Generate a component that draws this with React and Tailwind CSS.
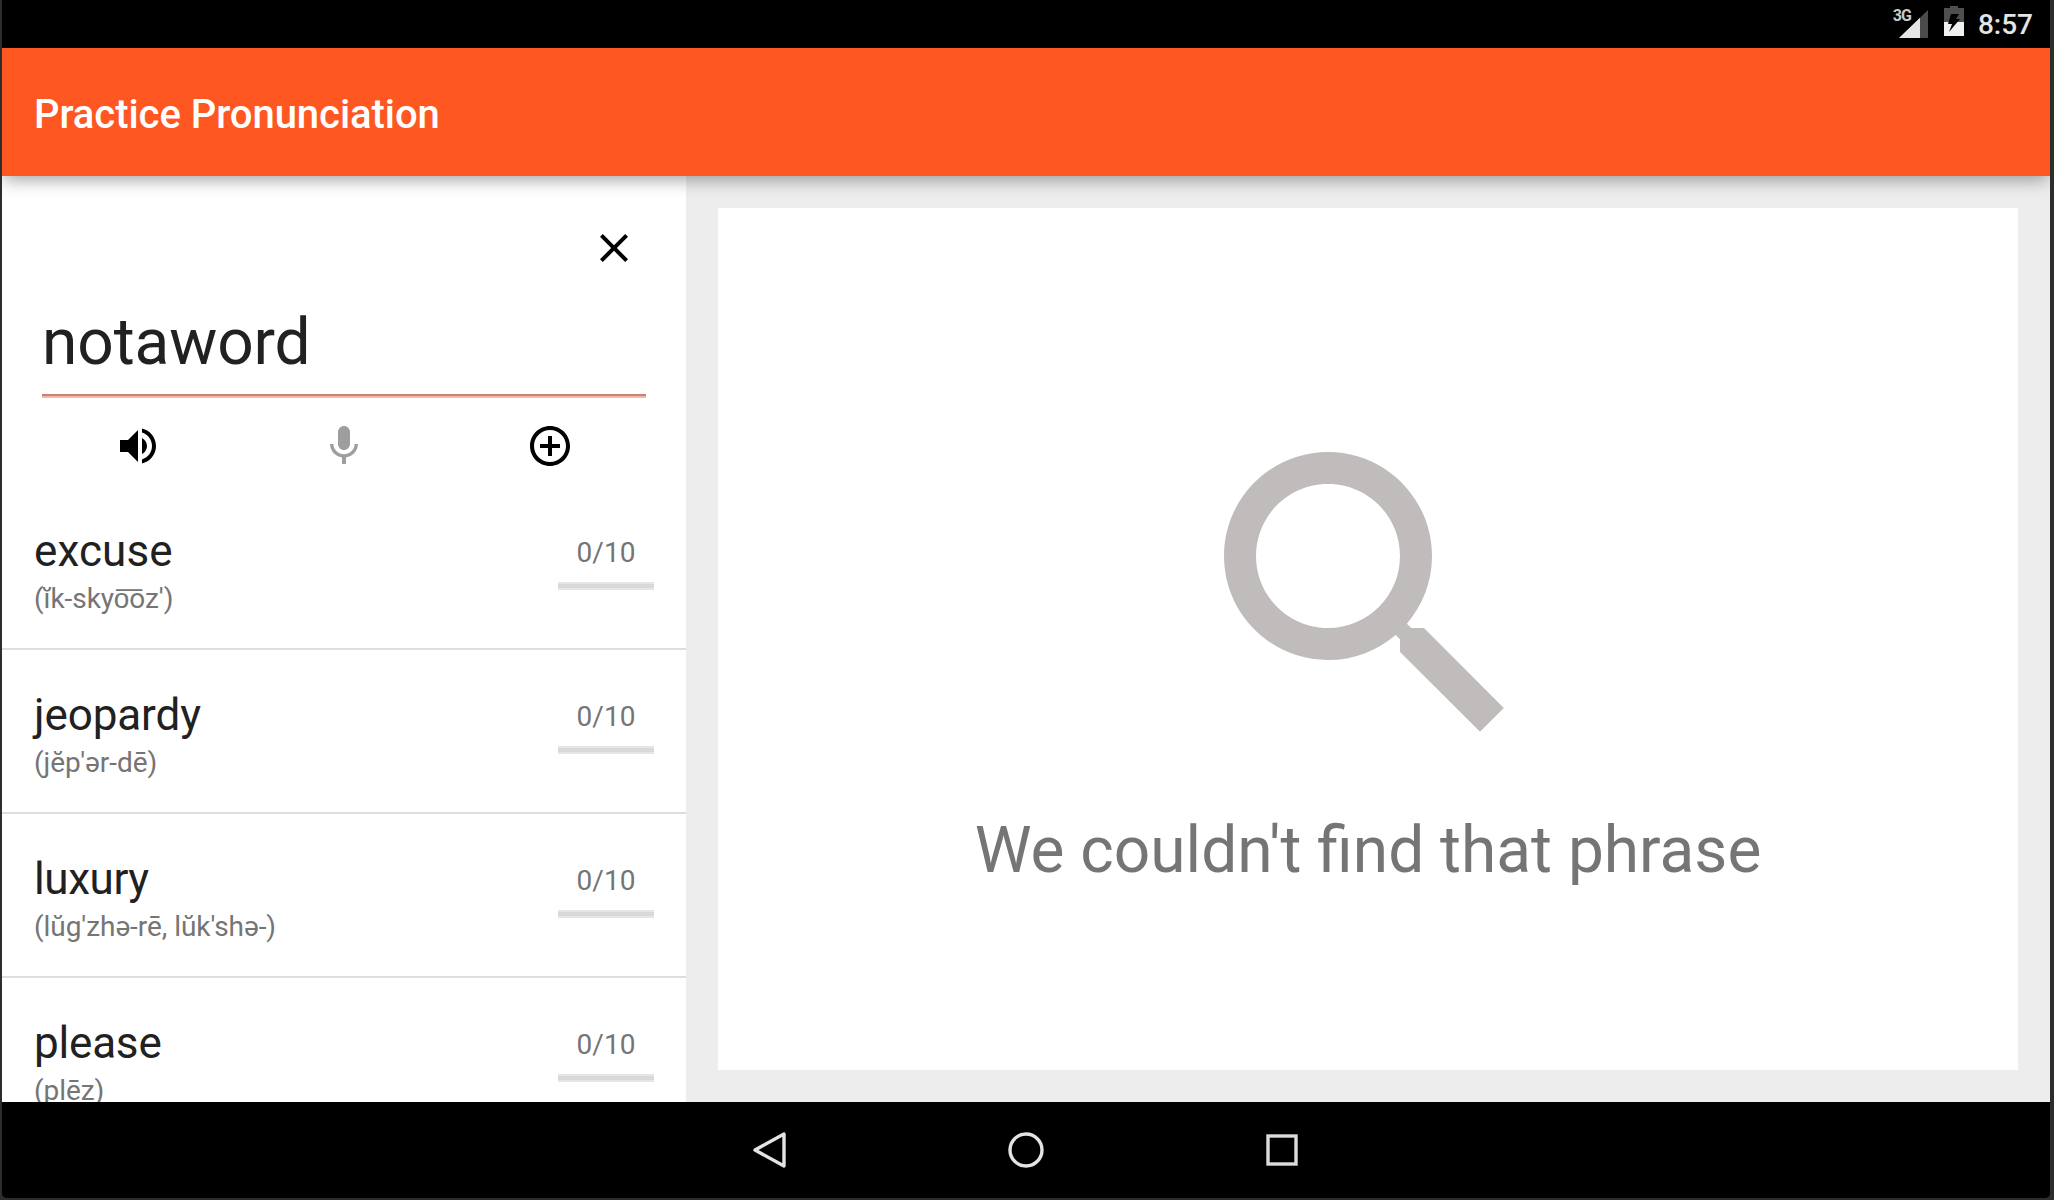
import React from "react";

const words = [
  { word: "excuse", say: "(ĭk-skyo͞oz')", tracking: "tracking-[0.1px]" },
  { word: "jeopardy", say: "(jĕp'ər-dē)", tracking: "tracking-[-0.1px]" },
  { word: "luxury", say: "(lŭg'zhə-rē, lŭk'shə-)", tracking: "tracking-[-0.4px]" },
  { word: "please", say: "(plēz)", tracking: "tracking-[-0.2px]" },
];

function Icon({ d, className }) {
  return (
    <svg viewBox="0 0 24 24" fill="currentColor" className={className}>
      <path d={d} />
    </svg>
  );
}

const CLOSE =
  "M19 6.41L17.59 5 12 10.59 6.41 5 5 6.41 10.59 12 5 17.59 6.41 19 12 13.41 17.59 19 19 17.59 13.41 12z";
const VOLUME =
  "M3 9v6h4l5 5V4L7 9H3zm13.5 3c0-1.77-1.02-3.29-2.5-4.03v8.05c1.48-.73 2.5-2.25 2.5-4.02zM14 3.23v2.06c2.89.86 5 3.54 5 6.71s-2.11 5.85-5 6.71v2.06c4.01-.91 7-4.49 7-8.77s-2.99-7.86-7-8.77z";
const MIC =
  "M12 14c1.66 0 2.99-1.34 2.99-3L15 5c0-1.66-1.34-3-3-3S9 3.34 9 5v6c0 1.66 1.34 3 3 3zm5.3-3c0 3-2.54 5.1-5.3 5.1S6.7 14 6.7 11H5c0 3.41 2.72 6.23 6 6.72V21h2v-3.28c3.28-.48 6-3.3 6-6.72h-1.7z";
const ADD =
  "M13 7h-2v4H7v2h4v4h2v-4h4v-2h-4V7zm-1-5C6.48 2 2 6.48 2 12s4.48 10 10 10 10-4.48 10-10S17.52 2 12 2zm0 18c-4.41 0-8-3.59-8-8s3.59-8 8-8 8 3.59 8 8-3.59 8-8 8z";
const SEARCH =
  "M15.5 14h-.79l-.28-.27C15.41 12.59 16 11.11 16 9.5 16 5.91 13.09 3 9.5 3S3 5.91 3 9.5 5.91 16 9.5 16c1.61 0 3.09-.59 4.23-1.57l.27.28v.79l5 4.99L20.49 19l-4.99-5zm-6 0C7.01 14 5 11.99 5 9.5S7.01 5 9.5 5 14 7.01 14 9.5 11.99 14 9.5 14z";

function StatusBar() {
  return (
    <div className="flex h-12 shrink-0 justify-end bg-black pr-[17px] text-[#e4e4e4]">
      <div className="mt-2 flex h-[30px]">
        <span className="-mr-[12px] h-4 text-[16px] leading-4 font-bold tracking-[-1px] text-[#c8c8c8]">3G</span>
        <svg viewBox="0 0 29 28" className="mt-[2px] h-7 w-[29px]">
          <path d="M29 0V28H0z" fill="#4b4b4b" />
          <path d="M21 7.7V28H0z" fill="#e6e6e6" />
        </svg>
      </div>
      <svg viewBox="0 0 20 30" className="mt-[6px] ml-4 h-[30px] w-5">
        <path d="M6 0h8v2h6v14H0V2h6z" fill="#4f4f4f" />
        <path d="M0 16h20v14H0z" fill="#f0f0f0" />
        <path d="M7 8h8l-3 5h4L5 26l3-8H4z" fill="#000" />
      </svg>
      <span className="ml-[14px] pt-[9px] text-[28px] leading-8 font-medium">8:57</span>
    </div>
  );
}

function WordRow({ word, say, tracking }) {
  return (
    <li className="flex h-[164px] shrink-0 justify-between border-b-2 border-[#dedede] pr-8 pl-8">
      <div className="pt-[39px]">
        <div className={`text-[44px] leading-[52px] text-[#212121] ${tracking}`}>{word}</div>
        <div className="text-[28px] leading-[44px] tracking-[-0.05px] text-[#757575]">{say}</div>
      </div>
      <div className="w-24 pt-[51px] text-center">
        <div className="text-[28px] leading-[32px] text-[#757575]">0/10</div>
        <div className="mt-[13px] h-2 border-y-2 border-[#e6e6e6] bg-[#d9d9d9]" />
      </div>
    </li>
  );
}

export default function App() {
  return (
    <div className="h-[1200px] w-[2054px] overflow-hidden bg-[#2c2d2d] pr-1 pb-0.5 pl-0.5 font-['Roboto',sans-serif]">
      <div className="flex h-full flex-col overflow-hidden rounded-b-[5px] bg-black">
        <StatusBar />
        <header className="relative z-10 flex h-32 shrink-0 items-center bg-[#ff5722] pt-[5px] pl-8 shadow-[0_6px_16px_-2px_rgba(0,0,0,0.36)]">
          <h1 className="text-[40px] leading-[48px] font-medium tracking-[-0.05px] text-white">Practice Pronunciation</h1>
        </header>
        <main className="flex h-[926px] shrink-0 overflow-hidden bg-[#ededed]">
          <aside className="flex w-[684px] shrink-0 flex-col overflow-hidden bg-white">
            <div className="flex shrink-0 justify-end pt-12 pr-12">
              <button className="size-12"><Icon d={CLOSE} className="size-12 text-black" /></button>
            </div>
            <div className="mr-10 ml-10 flex h-[126px] shrink-0 items-end border-b-2 border-[#f8b8a5]">
              <div className="h-full w-full border-b-2 border-[#c58573] pt-[33px] text-[64px] leading-[76px] tracking-[-0.1px] text-[#212121]">
                notaword
              </div>
            </div>
            <div className="mt-6 mb-4 ml-[33px] grid w-[618px] shrink-0 grid-cols-3 justify-items-center">
              <Icon d={VOLUME} className="size-12 text-black" />
              <Icon d={MIC} className="size-12 text-[#9e9e9e]" />
              <Icon d={ADD} className="size-12 text-black" />
            </div>
            <ul className="flex flex-col">
              {words.map((w) => (
                <WordRow key={w.word} {...w} />
              ))}
            </ul>
          </aside>
          <section className="m-8 flex flex-1 flex-col items-center bg-white pt-[196px]">
            <Icon d={SEARCH} className="size-96 text-[#c0bcbb]" />
            <p className="mt-[25px] text-[64px] leading-[76px] text-[#757575]">We couldn't find that phrase</p>
          </section>
        </main>
        <nav className="flex h-24 shrink-0 items-center justify-center gap-[216px] bg-black">
          <svg viewBox="0 0 40 40" className="size-10" fill="none" stroke="#e4e4e4" strokeWidth="3.4">
            <path d="M34 4v32L5 20z" strokeLinejoin="round" />
          </svg>
          <svg viewBox="0 0 40 40" className="size-10" fill="none" stroke="#e4e4e4" strokeWidth="3.4">
            <circle cx="20" cy="20" r="16" />
          </svg>
          <svg viewBox="0 0 40 40" className="size-10" fill="none" stroke="#dcdcdc" strokeWidth="3.4">
            <rect x="6" y="6" width="28" height="28" />
          </svg>
        </nav>
      </div>
    </div>
  );
}
